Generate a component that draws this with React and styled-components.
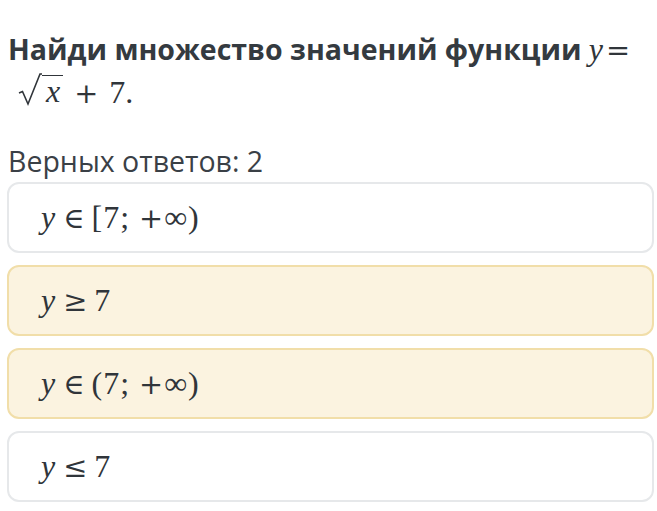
import React from 'react';
import styled, { createGlobalStyle } from 'styled-components';

const Global = createGlobalStyle`
  html, body { margin: 0; padding: 0; background: #fff; }
  body { font-family: "Open Sans", "Noto Sans", sans-serif; color: #343a40; }
`;

const Page = styled.div`
  padding: 28px 3px 0 7px;
  display: flex;
  flex-direction: column;
`;

const Title = styled.h1`
  margin: 0 0 0 1px;
  font-size: 28.5px;
  font-weight: 700;
  line-height: 42px;
  color: #343a40;
`;

const M = styled.span`
  font-family: "Liberation Serif", "DejaVu Serif", serif;
  font-weight: 400;
  font-size: ${p => p.size || 32}px;
  color: #30353a;
  white-space: nowrap;
`;

const I = styled.i`
  font-style: italic;
  margin-right: ${p => p.mr || 0}px;
`;

const Op = styled.span`
  font-family: "DejaVu Serif", serif;
  font-size: 0.9em;
  margin: 0 ${p => p.gap ?? 7}px;
`;

const Sqrt = styled.span`
  display: inline-flex;
  align-items: flex-end;
  margin-left: 10px;
  vertical-align: -4px;
`;

const Radicand = styled.span`
  border-top: 1.5px solid #30353a;
  padding: 0 3px 0 4px;
  line-height: 31px;
  font-style: italic;
`;

const Interval = styled.span`
  letter-spacing: 1px;
`;

const Count = styled.div`
  margin: 28px 0 0 1px;
  font-size: 28.5px;
  line-height: 38px;
  color: #3a4046;
`;

const List = styled.div`
  display: flex;
  flex-direction: column;
  gap: 12px;
  margin-top: 2px;
`;

const Option = styled.div`
  height: 71px;
  box-sizing: border-box;
  border-radius: 12px;
  border: 2px solid ${p => (p.selected ? '#f1dea9' : '#e6e8ea')};
  background: ${p => (p.selected ? '#fbf3e0' : '#ffffff')};
  display: flex;
  align-items: center;
  padding-left: 32px;
`;

const Radical = () => (
  <svg width="24" height="34" viewBox="0 0 24 34">
    <path d="M1 20 L4.5 18.5 L10 31 L22 1 L24 1" fill="none" stroke="#30353a" strokeWidth="1.6" />
  </svg>
);

const options = [
  { sel: false, body: <><I mr={1}>y</I><Op>∈</Op><Interval>[7; <Op gap={0}>+</Op>∞)</Interval></> },
  { sel: true, body: <><I mr={1}>y</I><Op>≥</Op>7</> },
  { sel: true, body: <><I mr={1}>y</I><Op>∈</Op><Interval>(7; <Op gap={0}>+</Op>∞)</Interval></> },
  { sel: false, body: <><I mr={1}>y</I><Op>≤</Op>7</> },
];

export default function App() {
  return (
    <Page>
      <Global />
      <Title>
        Найди множество значений функции{' '}
        <M><I>y</I><Op gap={3}>=</Op></M>
        <br />
        <M>
          <Sqrt><Radical /><Radicand>x</Radicand></Sqrt>
          <Op gap={11}>+</Op>7.
        </M>
      </Title>
      <Count>Верных ответов: 2</Count>
      <List>
        {options.map((o, i) => (
          <Option key={i} selected={o.sel}>
            <M>{o.body}</M>
          </Option>
        ))}
      </List>
    </Page>
  );
}
